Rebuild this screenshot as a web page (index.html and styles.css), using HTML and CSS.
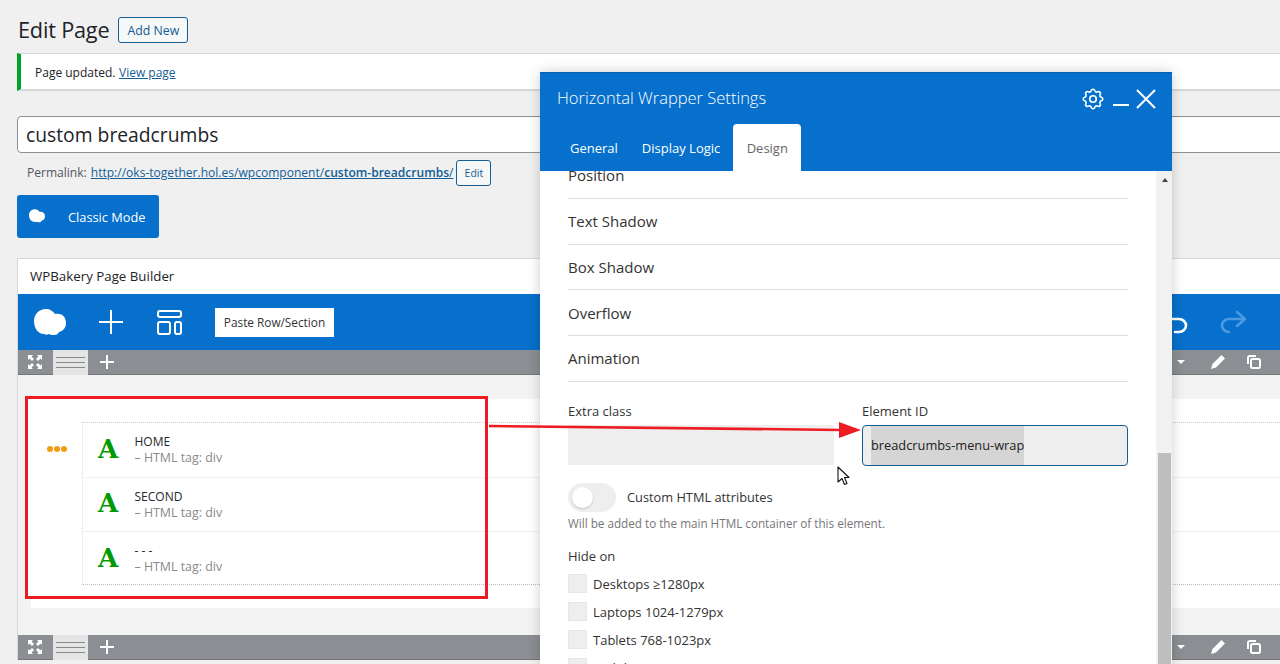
FILE: index.html
```html
<!DOCTYPE html>
<html lang="en">
<head>
<meta charset="utf-8">
<title>Edit Page</title>
<link rel="stylesheet" href="styles.css">
</head>
<body>
<main class="main">
  <div class="head">
    <h1 class="title">Edit Page</h1>
    <a class="btn-add">Add New</a>
  </div>
  <div class="notice">Page updated. <a class="link">View page</a></div>
  <div class="title-input">custom breadcrumbs</div>
  <div class="permalink">
    <span class="perm-label">Permalink:</span>
    <a class="link">http://oks-together.hol.es/wpcomponent/<b class="slug">custom-breadcrumbs</b>/</a>
    <a class="btn-edit">Edit</a>
  </div>
  <a class="btn-classic">
    <svg class="ic-cloud-s" viewBox="0 0 32 27"><path fill="#fff" d="M12 0c4 0 7 2 9 5 6-1 11 2 11 9 0 5-3 8-7 9-1 2-2 3-5 3-2 0-3 0-5-1-2 1-3 1-5 0C4 25 0 19 0 12 0 5 5 0 12 0z"/></svg>
    <span>Classic Mode</span>
  </a>
  <section class="builder">
    <div class="builder-head">WPBakery Page Builder</div>
    <div class="toolbar">
      <svg class="ic-cloud" viewBox="0 0 32 27"><path fill="#fff" d="M12 0c4 0 7 2 9 5 6-1 11 2 11 9 0 5-3 8-7 9-1 2-2 3-5 3-2 0-3 0-5-1-2 1-3 1-5 0C4 25 0 19 0 12 0 5 5 0 12 0z"/></svg>
      <svg class="ic-plus" viewBox="0 0 24 24"><path d="M12 0v24M0 12h24" stroke="#fff" stroke-width="2" fill="none"/></svg>
      <svg class="ic-layout" viewBox="0 0 25 25"><g fill="none" stroke="#fff" stroke-width="2"><rect x="1" y="1" width="23" height="6" rx="2"/><rect x="1" y="12" width="12" height="12" rx="2"/><rect x="18" y="12" width="6" height="12" rx="2"/></g></svg>
      <a class="btn-paste">Paste Row/Section</a>
      <div class="toolbar-end">
        <svg class="ic-undo" viewBox="0 0 27 24"><path d="M10 2 2 9l8 7M2 9h16c4 0 7 3 7 6.500S22 22 18 22h-4" fill="none" stroke="#fff" stroke-width="2.600" stroke-linecap="round" stroke-linejoin="round"/></svg>
        <svg class="ic-redo" viewBox="0 0 27 24"><path d="M17 2l8 7-8 7M25 9H9c-4 0-7 3-7 6.500S5 22 9 22" fill="none" stroke="#4d9ae0" stroke-width="2.600" stroke-linecap="round" stroke-linejoin="round"/></svg>
      </div>
    </div>
    <div class="rowbar">
      <svg class="ic-full" viewBox="0 0 14 14"><path fill="#fff" d="M0 0h5L3.500 1.500 6 4 4 6 1.500 3.500 0 5zM14 0v5l-1.500-1.500L10 6 8 4l2.500-2.500L9 0zM0 14V9l1.500 1.500L4 8l2 2-2.500 2.500L5 14zM14 14H9l1.500-1.500L8 10l2-2 2.500 2.500L14 9z"/></svg>
      <span class="rowtab"><i></i><i></i><i></i></span>
      <svg class="ic-small-plus" viewBox="0 0 14 14"><path d="M7 0v14M0 7h14" stroke="#fff" stroke-width="2" fill="none"/></svg>
      <div class="rowbar-end">
        <span class="caret"></span>
        <svg class="ic-pencil" viewBox="0 0 14 14"><path fill="#fff" d="M10.500 0 14 3.500 5 12.500 0 14l1.500-5z"/></svg>
        <svg class="ic-copy" viewBox="0 0 14 14"><g fill="none" stroke="#fff" stroke-width="2"><path d="M9 1H3a2 2 0 0 0-2 2v6"/><rect x="4" y="4" width="9" height="9" rx="1.500"/></g></svg>
      </div>
    </div>
    <div class="canvas">
      <div class="canvas-row">
        <div class="handle"><i></i><i></i><i></i></div>
        <div class="items">
          <div class="item"><span class="letter">A</span><div><div class="item-name">HOME</div><div class="item-sub">– HTML tag: div</div></div></div>
          <div class="item"><span class="letter">A</span><div><div class="item-name">SECOND</div><div class="item-sub">– HTML tag: div</div></div></div>
          <div class="item"><span class="letter">A</span><div><div class="item-name">- - -</div><div class="item-sub">– HTML tag: div</div></div></div>
        </div>
      </div>
    </div>
    <div class="rowbar">
      <svg class="ic-full" viewBox="0 0 14 14"><path fill="#fff" d="M0 0h5L3.500 1.500 6 4 4 6 1.500 3.500 0 5zM14 0v5l-1.500-1.500L10 6 8 4l2.500-2.500L9 0zM0 14V9l1.500 1.500L4 8l2 2-2.500 2.500L5 14zM14 14H9l1.500-1.500L8 10l2-2 2.500 2.500L14 9z"/></svg>
      <span class="rowtab"><i></i><i></i><i></i></span>
      <svg class="ic-small-plus" viewBox="0 0 14 14"><path d="M7 0v14M0 7h14" stroke="#fff" stroke-width="2" fill="none"/></svg>
      <div class="rowbar-end">
        <span class="caret"></span>
        <svg class="ic-pencil" viewBox="0 0 14 14"><path fill="#fff" d="M10.500 0 14 3.500 5 12.500 0 14l1.500-5z"/></svg>
        <svg class="ic-copy" viewBox="0 0 14 14"><g fill="none" stroke="#fff" stroke-width="2"><path d="M9 1H3a2 2 0 0 0-2 2v6"/><rect x="4" y="4" width="9" height="9" rx="1.500"/></g></svg>
      </div>
    </div>
  </section>
</main>

<div class="annot-box"></div>
<svg class="annot-arrow" viewBox="0 0 372 16"><path d="M0 4 352 8" stroke="#ed1c24" stroke-width="2.500" fill="none"/><path d="M350 0l22 8-22 8z" fill="#ed1c24"/></svg>

<aside class="panel">
  <header class="panel-head">
    <div class="panel-top">
      <span class="panel-title">Horizontal Wrapper Settings</span>
      <div class="panel-ctrls">
        <svg class="ic-gear" viewBox="0 0 24 24"><g fill="none" stroke="#fff" stroke-width="1.500"><path d="M10.325 4.317c.426 -1.756 2.924 -1.756 3.35 0a1.724 1.724 0 0 0 2.573 1.066c1.543 -.94 3.31 .826 2.37 2.37a1.724 1.724 0 0 0 1.065 2.572c1.756 .426 1.756 2.924 0 3.35a1.724 1.724 0 0 0 -1.066 2.573c.94 1.543 -.826 3.31 -2.37 2.37a1.724 1.724 0 0 0 -2.572 1.065c-.426 1.756 -2.924 1.756 -3.35 0a1.724 1.724 0 0 0 -2.573 -1.066c-1.543 .94 -3.31 -.826 -2.37 -2.37a1.724 1.724 0 0 0 -1.065 -2.572c-1.756 -.426 -1.756 -2.924 0 -3.35a1.724 1.724 0 0 0 1.066 -2.573c-.94 -1.543 .826 -3.31 2.37 -2.37c1 .608 2.296 .07 2.572 -1.065z"/><circle cx="12" cy="12" r="3"/></g></svg>
        <svg class="ic-min" viewBox="0 0 16 16"><path d="M0 14h16" stroke="#fff" stroke-width="2" fill="none"/></svg>
        <svg class="ic-close" viewBox="0 0 20 20"><path d="M1 1l18 18M19 1 1 19" stroke="#fff" stroke-width="2" fill="none"/></svg>
      </div>
    </div>
    <nav class="tabs">
      <a class="tab">General</a>
      <a class="tab">Display Logic</a>
      <a class="tab tab-active">Design</a>
    </nav>
  </header>
  <div class="panel-body">
    <div class="panel-scroll">
      <div class="acc">Position</div>
      <div class="acc">Text Shadow</div>
      <div class="acc">Box Shadow</div>
      <div class="acc">Overflow</div>
      <div class="acc">Animation</div>
      <div class="fields">
        <div>
          <div class="field-label">Extra class</div>
          <div class="field"></div>
        </div>
        <div>
          <div class="field-label">Element ID</div>
          <div class="field field-focus"><span class="selected">breadcrumbs-menu-wrap</span></div>
        </div>
      </div>
      <div class="switch-row">
        <span class="switch"><span class="knob"></span></span>
        <span class="switch-label">Custom HTML attributes</span>
      </div>
      <div class="help">Will be added to the main HTML container of this element.</div>
      <div class="hide-title">Hide on</div>
      <div class="check"><span class="box"></span>Desktops ≥1280px</div>
      <div class="check"><span class="box"></span>Laptops 1024-1279px</div>
      <div class="check"><span class="box"></span>Tablets 768-1023px</div>
      <div class="check"><span class="box"></span>Mobiles &lt;767px</div>
    </div>
    <div class="scrollbar">
      <span class="sb-up"></span>
      <span class="sb-thumb"></span>
    </div>
  </div>
</aside>

<svg class="cursor" viewBox="0 0 13 20"><path d="M1 1v15l4-3.500 2.500 6 2.500-1-2.500-6H12z" fill="#fff" stroke="#111" stroke-width="1.100" stroke-linejoin="round"/></svg>
</body>
</html>
```

FILE: styles.css
```css
* { box-sizing: border-box; }
html, body { margin: 0; height: 664px; overflow: hidden; }
body {
  background: #f0f0f1;
  color: #1d2327;
  font-family: "Open Sans", "Noto Sans", sans-serif;
  font-size: 12px;
  position: relative;
}
.main { padding-left: 17px; }

.head { display: flex; align-items: center; gap: 9px; padding-top: 17px; height: 43px; }
.title { margin: 0 0 0 1px; font-size: 21.700px; font-weight: 400; line-height: 26px; letter-spacing: -.2px; }
.btn-add {
  height: 26px; width: 70px; display: flex; align-items: center; justify-content: center;
  border: 1px solid #135e96; border-radius: 3px; color: #135e96; background: #f6f7f7; font-size: 12.300px;
}
.notice {
  margin-top: 10px; margin-right: -6px; height: 38px; padding: 1px 0 0 14px; display: flex; align-items: center; gap: 3.500px;
  background: #fff; border-left: 4px solid #00a32a; border-top: 1px solid #d8d8d8; border-bottom: 2px solid #d8d8d8;
  font-size: 12px;
}
.link { color: #135e96; text-decoration: underline; }
.title-input {
  margin-top: 25px; margin-right: -6px; height: 37px; padding-left: 8px; display: flex; align-items: center;
  background: #fff; border: 1px solid #8c8f94; border-radius: 4px; font-size: 19.300px;
}
.permalink { margin-top: 7px; height: 26px; padding-left: 10px; display: flex; align-items: center; gap: 4px; font-size: 12.050px; color: #50575e; }
.permalink .link, .perm-label { margin-top: -2px; }
.slug { font-weight: 600; }
.btn-edit {
  margin-left: -1px; width: 35px; height: 26px; display: flex; align-items: center; justify-content: center;
  border: 1px solid #135e96; border-radius: 3px; color: #135e96; background: #f6f7f7; font-size: 10.500px;
}
.btn-classic {
  margin-top: 9px; width: 142px; height: 43px; padding: 1px 0 0 12px; display: flex; align-items: center; gap: 23px;
  background: #0670cc; color: #fff; border-radius: 3px; font-size: 12.800px;
}
.ic-cloud-s { width: 16px; height: 14px; margin-top: -3px; }

.builder { margin-top: 20px; border-top: 1px solid #d8d8d8; border-left: 1px solid #d8d8d8; background: #f3f3f3; }
.builder-head { height: 35px; padding: 0 0 1px 12px; display: flex; align-items: center; background: #fff; font-size: 13.300px; font-weight: 500; color: #1d2327; }
.toolbar { height: 56px; background: #0670cc; display: flex; align-items: center; padding-left: 16px; padding-right: 33px; }
.ic-cloud { width: 32px; height: 27px; flex: none; }
.ic-plus { width: 24px; height: 24px; margin-left: 33px; flex: none; }
.ic-layout { width: 25px; height: 25px; margin-left: 34px; flex: none; }
.btn-paste { margin-left: 33px; width: 119px; height: 29px; background: #fff; color: #333; display: flex; align-items: center; justify-content: center; font-size: 11.800px; }
.toolbar-end { margin-left: auto; display: flex; gap: 32px; align-items: center; }
.ic-undo, .ic-redo { width: 27px; height: 24px; }
.rowbar { height: 25px; background: #8b8e92; display: flex; align-items: center; padding-left: 10px; padding-right: 19px; border-bottom: 1px solid #777; }
.ic-full { width: 14px; height: 14px; flex: none; }
.rowtab { margin-left: 11px; width: 35px; height: 25px; background: #e5e5e5; display: flex; flex-direction: column; justify-content: center; gap: 4px; padding: 0 3px; flex: none; }
.rowtab i { display: block; height: 1px; background: #888; }
.ic-small-plus { width: 14px; height: 14px; margin-left: 12px; flex: none; }
.rowbar-end { margin-left: auto; display: flex; align-items: center; }
.caret { width: 0; height: 0; border-left: 4px solid transparent; border-right: 4px solid transparent; border-top: 4px solid #fff; }
.ic-pencil { width: 14px; height: 14px; margin-left: 26px; }
.ic-copy { width: 14px; height: 14px; margin-left: 22px; }

.canvas { height: 260px; padding: 24px 0 27px 13px; }
.canvas-row { height: 209px; background: #fff; padding-top: 23px; display: flex; align-items: flex-start; }
.handle { width: 51px; height: 54px; flex: none; display: flex; align-items: center; justify-content: center; gap: 1px; }
.handle i { width: 6px; height: 6px; border-radius: 50%; background: #f39c12; }
.items { flex: 1; height: 163px; border-left: 1px dotted #ddd; border-top: 1px dotted #ccc; border-bottom: 1px dotted #bbb; }
.item { height: 54.500px; display: flex; align-items: center; padding-left: 15px; border-bottom: 1px solid #f0f0f0; }
.item:last-child { border-bottom: 0; height: 53px; }
.letter { width: 36.500px; margin-top: -2px; font-family: "DejaVu Serif", serif; font-weight: 700; font-size: 26px; line-height: 1; color: #009a00; }
.item-name { font-size: 12px; line-height: 16px; color: #23282d; }
.item-sub { font-size: 12.400px; line-height: 15px; color: #8a8a8a; }

.annot-box { position: absolute; left: 25px; top: 396px; width: 463px; height: 202.500px; border: 3px solid #ed1c24; box-shadow: inset 3px 3px 0 #fff; }
.annot-arrow { position: absolute; left: 489px; top: 422px; width: 372px; height: 16px; z-index: 3; }

.panel { position: absolute; left: 540px; top: 72px; width: 632px; height: 592px; display: flex; flex-direction: column; background: #fff; box-shadow: 0 0 12px rgba(0,0,0,.2); z-index: 2; }
.panel-head { height: 99px; flex: none; background: #0670cc; border-top: 1px solid #0a5fb0; }
.panel-top { height: 51px; display: flex; align-items: center; justify-content: space-between; padding: 0 16px 0 17px; }
.panel-title { color: #fff; font-size: 16.500px; font-weight: 300; margin-top: -2px; }
.panel-ctrls { display: flex; align-items: center; gap: 7px; }
.ic-gear { width: 26px; height: 26px; }
.ic-min { width: 16px; height: 16px; }
.ic-close { width: 20px; height: 20px; }
.tabs { display: flex; align-items: stretch; height: 47px; padding-left: 18px; }
.tab { display: flex; align-items: center; padding: 1px 12px 0; color: #fff; font-size: 13px; font-weight: 500; }
.tab-active { background: #fff; color: #666; font-weight: 400; border-radius: 4px 4px 0 0; width: 68px; margin-left: 1px; padding: 1px 0 0; justify-content: center; }

.panel-body { flex: 1; min-height: 0; display: flex; overflow: hidden; }
.panel-scroll { flex: 1; padding: 0 28px; margin-top: -18px; }
.acc { height: 45.750px; display: flex; align-items: center; font-size: 15px; font-weight: 500; border-bottom: 1px solid #ddd; color: #333; }
.fields { display: grid; grid-template-columns: 266px 266px; gap: 28px; margin-top: 20px; }
.field-label { font-size: 13px; font-weight: 500; line-height: 18px; margin-bottom: 5px; color: #333; }
.field { height: 40px; background: #eee; border-radius: 2px; }
.field-focus { height: 41px; border: 1px solid #135e96; border-radius: 4px; padding: 0 0 0 8px; }
.selected { display: inline-flex; align-items: center; height: 39px; background: #d5d5d5; font-size: 12.800px; color: #222; }
.switch-row { display: flex; align-items: center; gap: 11px; margin-top: 17px; height: 29px; }
.switch { width: 48px; height: 29px; border-radius: 15px; background: #eee; padding: 4px; display: block; }
.knob { display: block; width: 21px; height: 21px; border-radius: 50%; background: #fff; box-shadow: 0 1px 2px rgba(0,0,0,.2); }
.switch-label { font-size: 12.800px; color: #333; }
.help { font-size: 11.700px; color: #777; margin-top: 3px; line-height: 16px; }
.hide-title { font-size: 13px; font-weight: 500; margin-top: 16px; line-height: 18px; color: #333; }
.check { display: flex; align-items: center; gap: 6px; height: 20px; margin-top: 8px; font-size: 13px; color: #333; }
.hide-title + .check { margin-top: 9px; }
.box { width: 19px; height: 19px; background: #eee; border: 1px solid #e6e6e6; flex: none; margin-top: -1px; }

.scrollbar { width: 17px; flex: none; background: #f1f1f1; display: flex; flex-direction: column; align-items: center; }
.sb-up { flex: none; margin-top: 7px; border-left: 3.500px solid transparent; border-right: 3.500px solid transparent; border-bottom: 4px solid #444; }
.sb-thumb { flex: none; width: 13px; height: 230px; margin-top: 271px; background: #bdbdbd; }

.cursor { position: absolute; left: 837px; top: 466px; width: 13px; height: 20px; z-index: 4; }
```
